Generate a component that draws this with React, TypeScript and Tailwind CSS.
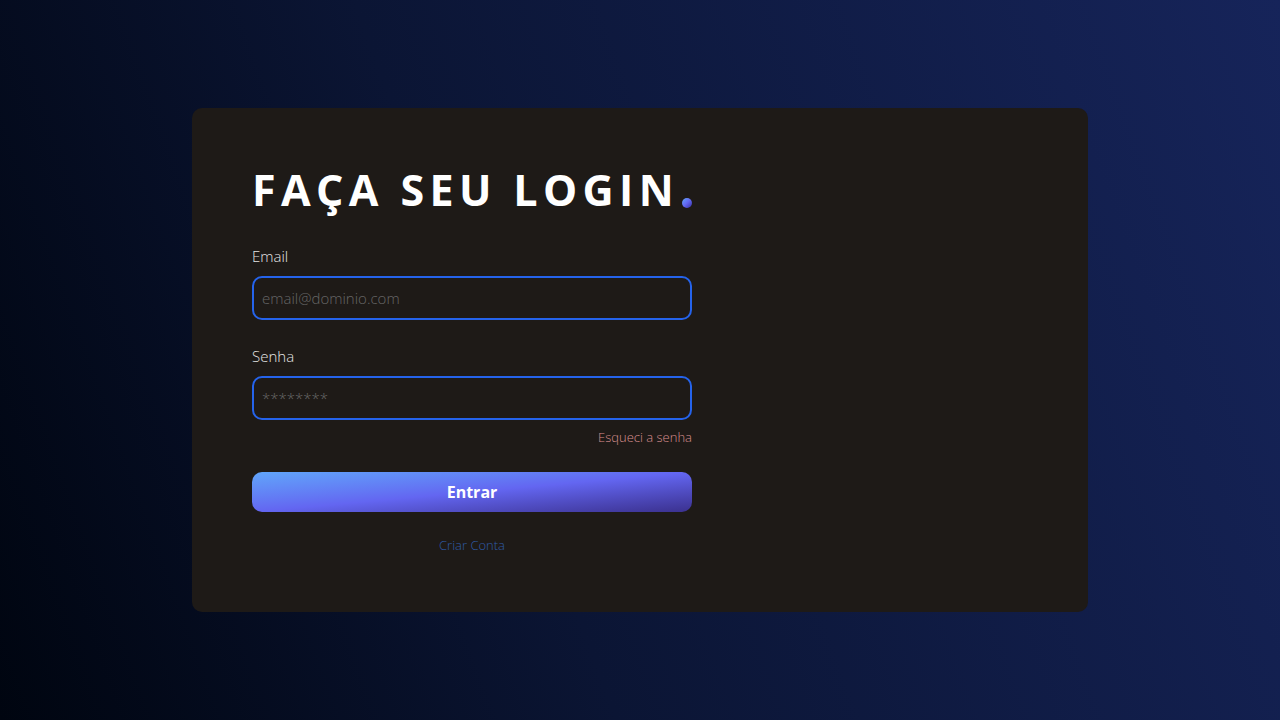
export default function App() {
  return (
    <div
      className="w-full h-[720px] flex items-start justify-center pt-[108px] bg-[linear-gradient(70deg,#000510_0%,#0b1534_40%,#16245a_100%)]"
      style={{ fontFamily: '"Open Sans", "Noto Sans", sans-serif' }}
    >
      <div className="w-[896px] h-[504px] rounded-[10px] bg-[#1e1a17] px-[60px] pt-[50px]">
        <div className="w-[440px] flex flex-col">
          <h1 className="flex items-end whitespace-nowrap text-white font-bold text-[43px] leading-[64px] tracking-[0.125em]">
            <span>FAÇA SEU LOGIN</span>
            <span className="ml-[3px] mb-[14px] w-[10px] h-[10px] rounded-full bg-gradient-to-br from-[#60a5fa] via-[#6366f1] to-[#3730a3]" />
          </h1>
          <label className="mt-[24px] text-[15px] leading-[20px] font-light text-[#e5e5e5]">Email</label>
          <input
            className="mt-[10px] h-[44px] w-full rounded-[10px] border-2 border-[#2563eb] bg-transparent px-[8px] text-[15px] font-light text-white placeholder:text-[#666] outline-none"
            placeholder="email@dominio.com"
          />
          <label className="mt-[26px] text-[15px] leading-[20px] font-light text-[#e5e5e5]">Senha</label>
          <input
            type="password"
            className="mt-[10px] h-[44px] w-full rounded-[10px] border-2 border-[#2563eb] bg-transparent px-[8px] text-[15px] font-light text-white placeholder:text-[#666] outline-none"
            placeholder="********"
          />
          <div className="mt-[8px] text-right text-[13px] leading-[18px] font-light text-[#d98f8f]">Esqueci a senha</div>
          <button className="mt-[26px] h-[40px] w-full rounded-[10px] bg-gradient-to-br from-[#60a5fa] via-[#6366f1] to-[#3b318f] text-white font-bold text-[16px]">
            Entrar
          </button>
          <div className="mt-[24px] text-center text-[13px] leading-[18px] font-light text-[#2f5ba8]">Criar Conta</div>
        </div>
      </div>
    </div>
  );
}
